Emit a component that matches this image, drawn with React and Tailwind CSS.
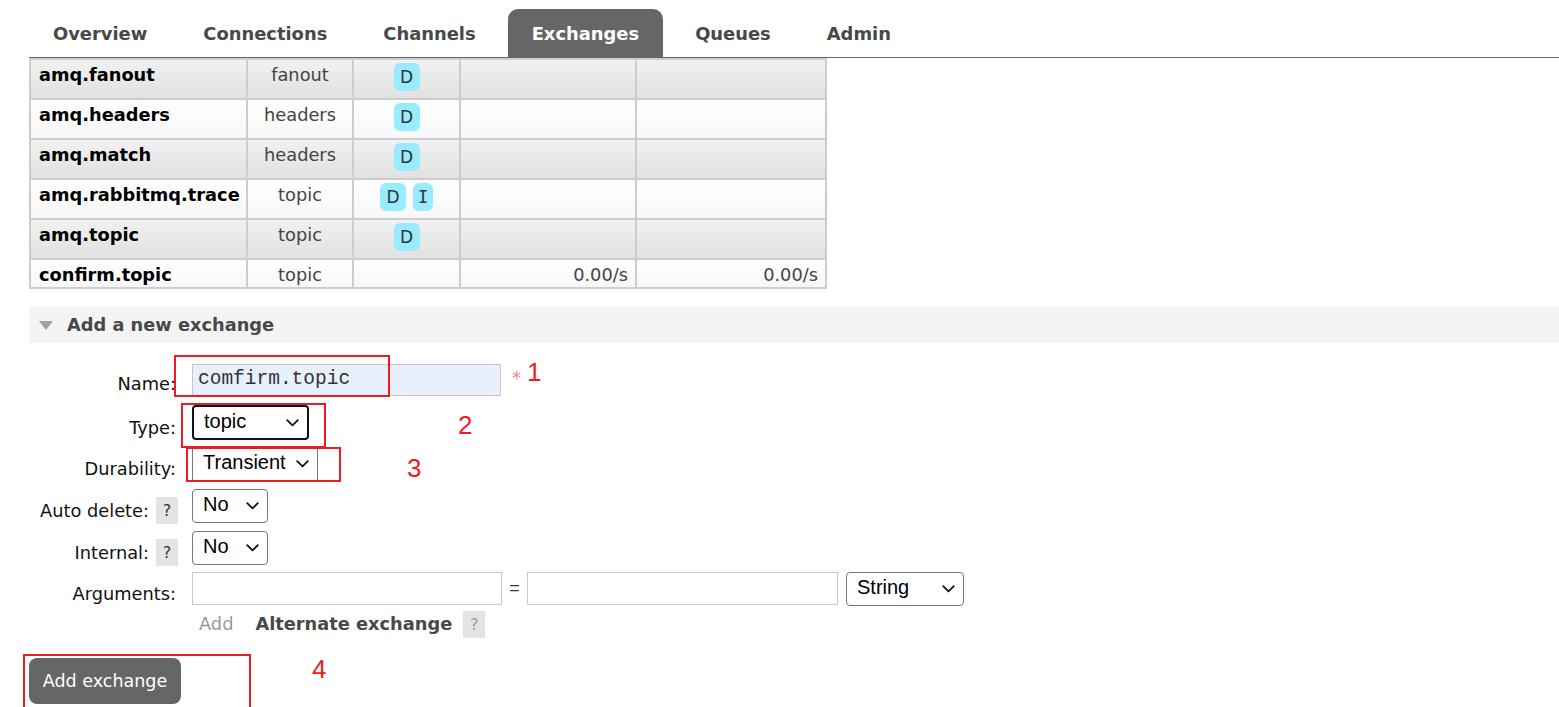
import React from "react";

const Chevron = ({ className = "" }) => (
  <svg className={className} width="13" height="8" viewBox="0 0 13 8" fill="none">
    <path d="M1.2 1.2 L6.5 6.4 L11.8 1.2" stroke="#111" strokeWidth="1.8" strokeLinecap="round" strokeLinejoin="round" />
  </svg>
);

const Badge = ({ children, w = "w-[26px]", mono }) => (
  <span
    className={`inline-flex ${w} h-[28px] items-center justify-center rounded-[6px] bg-[#99ebff] text-[#333] text-[17px] font-normal`}
    style={mono ? { fontFamily: '"DejaVu Sans Mono", monospace' } : undefined}
  >
    {children}
  </span>
);

const rows = [
  { name: "amq.fanout", type: "fanout", badges: ["D"] },
  { name: "amq.headers", type: "headers", badges: ["D"] },
  { name: "amq.match", type: "headers", badges: ["D"] },
  { name: "amq.rabbitmq.trace", type: "topic", badges: ["D", "I"] },
  { name: "amq.topic", type: "topic", badges: ["D"] },
  { name: "confirm.topic", type: "topic", badges: [], rates: true },
];

const Help = ({ light }) => (
  <span className={`inline-flex w-[22px] h-[27px] items-center justify-center bg-[#e4e4e4] text-[16px] ${light ? "text-[#999]" : "text-[#333]"}`}>?</span>
);

const FakeSelect = ({ value, w, focused, square }) => (
  <div
    className={`flex items-center justify-between ${w} pl-[10px] pr-[8px] bg-white text-[20px] text-black ${
      focused ? "h-[35px] border-2 border-[#111] rounded-[4px]" : square ? "h-[34px] border border-[#767676]" : "h-[34px] border border-[#767676] rounded-[4px]"
    }`}
    style={{ fontFamily: '"Liberation Sans", Arial, sans-serif' }}
  >
    <span className="leading-none -mt-[4px]">{value}</span>
    <Chevron />
  </div>
);

const Label = ({ children }) => (
  <div className="w-[178px] text-right pr-[2px] text-[#111] leading-none pb-[3px]">{children}</div>
);

export default function App() {
  const tabs = ["Overview", "Connections", "Channels", "Exchanges", "Queues", "Admin"];
  const cell = "border-2 border-[#cdcdcd] align-top pt-[4px] leading-[22px]";
  return (
    <div
      className="relative w-[1559px] h-[707px] overflow-hidden bg-white text-[17.8px] text-[#484848]"
      style={{ fontFamily: '"DejaVu Sans", Verdana, sans-serif' }}
    >
      {/* Tabs */}
      <div className="ml-[29px] mt-[9px] flex gap-[8px] border-b border-[#666]">
        {tabs.map((t) => (
          <div
            key={t}
            className={`h-[48px] px-[24px] pt-[2px] flex items-center font-bold text-[17.9px] ${
              t === "Exchanges" ? "bg-[#666] text-white rounded-t-[10px]" : "text-[#484848]"
            }`}
          >
            {t}
          </div>
        ))}
      </div>

      {/* Table */}
      <table className="ml-[29px] table-fixed border-collapse w-[796px]">
        <colgroup>
          <col className="w-[217px]" />
          <col className="w-[106px]" />
          <col className="w-[107px]" />
          <col className="w-[176px]" />
          <col className="w-[190px]" />
        </colgroup>
        <tbody>
          {rows.map((r, i) => {
            const bg = i % 2 === 0 ? "bg-linear-to-b from-[#f1f1f1] to-[#e1e1e1]" : "bg-linear-to-b from-white to-[#f7f7f7]";
            const h = r.rates ? "h-[29px]" : "h-[40px]";
            return (
              <tr key={r.name}>
                <td className={`${bg} ${h} ${cell} pl-[8px] font-bold text-black whitespace-nowrap`}>{r.name}</td>
                <td className={`${bg} ${cell} text-center text-[#444]`}>{r.type}</td>
                <td className={`${bg} ${cell} text-center`}>
                  <div className="flex justify-center gap-[7px] -mt-[1px]">
                    {r.badges.map((b) => (
                      <Badge key={b} w={b === "I" ? "w-[20px]" : "w-[26px]"} mono={b === "I"}>
                        {b}
                      </Badge>
                    ))}
                  </div>
                </td>
                <td className={`${bg} ${cell} text-right pr-[7px] text-[#444]`}>{r.rates ? "0.00/s" : ""}</td>
                <td className={`${bg} ${cell} text-right pr-[7px] text-[#444]`}>{r.rates ? "0.00/s" : ""}</td>
              </tr>
            );
          })}
        </tbody>
      </table>

      {/* Section header */}
      <div className="ml-[29px] mt-[18px] h-[36px] bg-[#f4f4f4] flex items-center pl-[10px]">
        <svg width="14" height="9" viewBox="0 0 14 9" className="mr-[14px]">
          <path d="M0 0 H14 L7 9 Z" fill="#a0a0a0" />
        </svg>
        <span className="font-bold text-[#484848]">Add a new exchange</span>
      </div>

      {/* Form */}
      <div className="mt-[21px]">
        <div className="flex items-end h-[32px]">
          <Label>Name:</Label>
          <div
            className="ml-[14px] w-[309px] h-[32px] border border-[#c8c8c8] bg-[#e8f0fe] flex items-center pl-[5px] text-[19.5px] text-[#333]"
            style={{ fontFamily: '"Liberation Mono", "Courier New", monospace' }}
          >
            comfirm.topic
          </div>
          <span className="ml-[11px] self-start -mt-[1px] text-[#ff7a7a] text-[18px] leading-none pt-[6px]">*</span>
        </div>

        <div className="flex items-end h-[35px] mt-[9px]">
          <Label>Type:</Label>
          <div className="ml-[14px]">
            <FakeSelect value="topic" w="w-[117px]" focused />
          </div>
        </div>

        <div className="flex items-end h-[34px] mt-[7px]">
          <Label>Durability:</Label>
          <div className="ml-[14px]">
            <FakeSelect value="Transient" w="w-[126px]" square />
          </div>
        </div>

        <div className="flex items-end h-[34px] mt-[8px]">
          <div className="w-[178px] flex justify-end items-end gap-[7px] text-[#111] leading-none">
            <span className="pb-[3px]">Auto delete:</span>
            <span className="-mb-[1px]">
              <Help />
            </span>
          </div>
          <div className="ml-[14px]">
            <FakeSelect value="No" w="w-[76px]" />
          </div>
        </div>

        <div className="flex items-end h-[34px] mt-[8px]">
          <div className="w-[178px] flex justify-end items-end gap-[7px] text-[#111] leading-none">
            <span className="pb-[3px]">Internal:</span>
            <span className="-mb-[1px]">
              <Help />
            </span>
          </div>
          <div className="ml-[14px]">
            <FakeSelect value="No" w="w-[76px]" />
          </div>
        </div>

        <div className="flex items-end h-[34px] mt-[7px]">
          <Label>Arguments:</Label>
          <div className="ml-[14px] flex items-start h-[34px]">
            <div className="w-[310px] h-[33px] border border-[#c8c8c8] bg-white" />
            <span className="w-[25px] h-[33px] flex items-center justify-center text-[#333] text-[18px]" style={{ fontFamily: '"Liberation Sans", Arial, sans-serif' }}>
              =
            </span>
            <div className="w-[311px] h-[33px] border border-[#c8c8c8] bg-white" />
            <div className="ml-[8px]">
              <FakeSelect value="String" w="w-[118px]" />
            </div>
          </div>
        </div>

        <div className="flex items-center mt-[5px] h-[27px] ml-[192px]">
          <span className="ml-[7px] text-[#999]">Add</span>
          <span className="ml-[22px] font-bold text-[#484848]">Alternate exchange</span>
          <span className="ml-[11px]">
            <Help light />
          </span>
        </div>

        <div className="ml-[29px] mt-[20px]">
          <button className="w-[152px] h-[46px] rounded-[8px] bg-[#666] text-white text-[17.5px]" style={{ fontFamily: '"DejaVu Sans", Verdana, sans-serif' }}>
            Add exchange
          </button>
        </div>
      </div>

      {/* Red annotations (overlay) */}
      <div className="absolute left-[174px] top-[355px] w-[216px] h-[42px] border-2 border-[#ed1c24]" />
      <div className="absolute left-[181px] top-[403px] w-[145px] h-[45px] border-2 border-[#ed1c24]" />
      <div className="absolute left-[186px] top-[447px] w-[155px] h-[35px] border-2 border-[#ed1c24]" />
      <div className="absolute left-[23px] top-[654px] w-[228px] h-[60px] border-2 border-[#ed1c24]" />
      <span className="absolute left-[527px] top-[359px] text-[26px] leading-none text-[#ed1c24]" style={{ fontFamily: '"Liberation Sans", Arial, sans-serif' }}>1</span>
      <span className="absolute left-[458px] top-[412px] text-[26px] leading-none text-[#ed1c24]" style={{ fontFamily: '"Liberation Sans", Arial, sans-serif' }}>2</span>
      <span className="absolute left-[407px] top-[455px] text-[26px] leading-none text-[#ed1c24]" style={{ fontFamily: '"Liberation Sans", Arial, sans-serif' }}>3</span>
      <span className="absolute left-[312px] top-[656px] text-[26px] leading-none text-[#ed1c24]" style={{ fontFamily: '"Liberation Sans", Arial, sans-serif' }}>4</span>
    </div>
  );
}
